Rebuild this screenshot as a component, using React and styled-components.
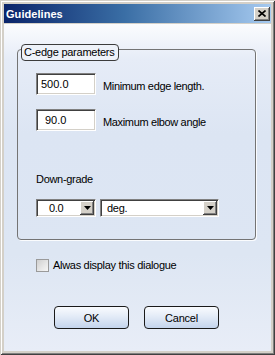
import React from "react";
import styled, { createGlobalStyle } from "styled-components";

const Global = createGlobalStyle`
  html, body { margin: 0; padding: 0; background: #d4d0c8; }
  body { font-family: "Liberation Sans", Arial, sans-serif; font-size: 11px; color: #000; }
`;

const Window = styled.div`
  width: 275px;
  height: 355px;
  box-sizing: border-box;
  padding: 4px;
  background: #d4d0c8;
  box-shadow: inset 1px 1px #d4d0c8, inset -1px -1px #404040, inset 2px 2px #fff, inset -2px -2px #808080;
  display: flex;
  flex-direction: column;
`;

const TitleBar = styled.div`
  height: 19px;
  flex: none;
  display: flex;
  align-items: center;
  justify-content: space-between;
  padding: 0 1px 0 2px;
  background: linear-gradient(to right, #0a246a 0%, #3a6ea5 45%, #a6caf0 100%);
`;

const Title = styled.span`
  color: #fff;
  font-weight: bold;
  font-size: 11px;
  letter-spacing: 0.05px;
`;

const CloseButton = styled.button`
  width: 16px;
  height: 14px;
  padding: 0;
  border: none;
  background: #d4d0c8;
  box-shadow: inset -1px -1px #404040, inset 1px 1px #fff, inset -2px -2px #808080, inset 2px 2px #d4d0c8;
  display: flex;
  align-items: center;
  justify-content: center;
`;

const Body = styled.div`
  flex: 1;
  margin-top: 1px;
  padding: 0 15px 0 13px;
  background: linear-gradient(180deg, #fbfcfe 0px, #e6ecf7 35px, #dce5f3 110px, #dde6f3 230px, #e8edf7 100%);
  display: flex;
  flex-direction: column;
`;

const Group = styled.div`
  position: relative;
  margin-top: 25px;
  height: 191px;
  box-sizing: border-box;
  border: 1px solid #747474;
  border-radius: 4px;
  box-shadow: 1px 1px 0 rgba(255, 255, 255, 0.85);
  padding: 23px 0 0 18px;
  display: flex;
  flex-direction: column;
`;

const Legend = styled.div`
  position: absolute;
  top: -6px;
  left: 3px;
  height: 17px;
  box-sizing: border-box;
  padding: 0 3px 0 2px;
  border: 1px solid #3c3c3c;
  border-radius: 4px;
  background: #eef2f9;
  line-height: 15px;
  letter-spacing: -0.25px;
  white-space: nowrap;
`;

const FieldRow = styled.div`
  display: flex;
  align-items: flex-end;
  gap: 7px;
  margin-top: ${(p) => p.$gap || 0}px;
`;

const TextField = styled.input`
  width: 60px;
  height: 22px;
  box-sizing: border-box;
  margin: 0;
  border-style: solid;
  border-width: 1px;
  border-color: #808080 #fff #fff #808080;
  box-shadow: inset 1px 1px #404040, inset -1px -1px #d4d0c8;
  padding: 0 0 0 ${(p) => p.$indent}px;
  background: #fff;
  font-family: "Liberation Sans", Arial, sans-serif;
  font-size: 11px;
  color: #000;
  outline: none;
`;

const Label = styled.span`
  line-height: 13px;
  margin-bottom: ${(p) => p.$drop ?? 2}px;
  letter-spacing: -0.35px;
  white-space: nowrap;
`;

const Caption = styled.div`
  margin-top: 42px;
  line-height: 13px;
  letter-spacing: -0.3px;
`;

const ComboRow = styled.div`
  display: flex;
  gap: 4px;
  margin-top: 13px;
`;

const Combo = styled.div`
  width: ${(p) => p.$w}px;
  height: 18px;
  box-sizing: border-box;
  border-style: solid;
  border-width: 1px;
  border-color: #808080 #fff #fff #808080;
  box-shadow: inset 1px 1px #404040, inset -1px -1px #d4d0c8;
  background: #fff;
  padding: 1px;
  display: flex;
  align-items: stretch;
`;

const ComboValue = styled.span`
  flex: 1;
  display: flex;
  align-items: center;
  padding-left: ${(p) => p.$indent}px;
  letter-spacing: -0.3px;
`;

const ArrowButton = styled.span`
  width: 14px;
  background: #d4d0c8;
  box-shadow: inset -1px -1px #404040, inset 1px 1px #fff, inset -2px -2px #808080;
  display: flex;
  align-items: center;
  justify-content: center;
`;

const CheckRow = styled.label`
  display: flex;
  align-items: center;
  gap: 4px;
  margin: 19px 0 0 19px;
`;

const CheckBox = styled.span`
  width: 13px;
  height: 13px;
  box-sizing: border-box;
  border: 1px solid #9a9a9a;
  background: linear-gradient(135deg, #cfcfcf 0%, #e6e6e6 55%, #f6f6f6 100%);
`;

const CheckText = styled.span`
  line-height: 13px;
  letter-spacing: -0.3px;
`;

const ButtonRow = styled.div`
  display: flex;
  gap: 15px;
  margin: 34px 0 0 37px;
`;

const DialogButton = styled.button`
  width: 75px;
  height: 23px;
  box-sizing: border-box;
  padding: 0;
  border: 1px solid #1a1a1a;
  border-radius: 4px;
  background: linear-gradient(180deg, #f9fbfe 0%, #e3ebf7 45%, #c4d4ec 100%);
  font-family: "Liberation Sans", Arial, sans-serif;
  font-size: 11px;
  color: #000;
  letter-spacing: -0.2px;
`;

const Arrow = () => (
  <svg width="7" height="4" viewBox="0 0 7 4">
    <polygon points="0,0 7,0 3.5,4" fill="#000" />
  </svg>
);

const CloseGlyph = () => (
  <svg width="8" height="7" viewBox="0 0 8 7">
    <path d="M0.5 0.5 L7.5 6.5 M7.5 0.5 L0.5 6.5" stroke="#000" strokeWidth="1.6" fill="none" />
  </svg>
);

export default function App() {
  return (
    <>
      <Global />
      <Window>
        <TitleBar>
          <Title>Guidelines</Title>
          <CloseButton aria-label="Close">
            <CloseGlyph />
          </CloseButton>
        </TitleBar>
        <Body>
          <Group>
            <Legend>C-edge parameters</Legend>
            <FieldRow>
              <TextField defaultValue="500.0" $indent={4} />
              <Label>Minimum edge length.</Label>
            </FieldRow>
            <FieldRow $gap={14}>
              <TextField defaultValue="90.0" $indent={8} />
              <Label>Maximum elbow angle</Label>
            </FieldRow>
            <Caption>Down-grade</Caption>
            <ComboRow>
              <Combo $w={60}>
                <ComboValue $indent={11}>0.0</ComboValue>
                <ArrowButton>
                  <Arrow />
                </ArrowButton>
              </Combo>
              <Combo $w={119}>
                <ComboValue $indent={5}>deg.</ComboValue>
                <ArrowButton>
                  <Arrow />
                </ArrowButton>
              </Combo>
            </ComboRow>
          </Group>
          <CheckRow>
            <CheckBox />
            <CheckText>Alwas display this dialogue</CheckText>
          </CheckRow>
          <ButtonRow>
            <DialogButton>OK</DialogButton>
            <DialogButton>Cancel</DialogButton>
          </ButtonRow>
        </Body>
      </Window>
    </>
  );
}
